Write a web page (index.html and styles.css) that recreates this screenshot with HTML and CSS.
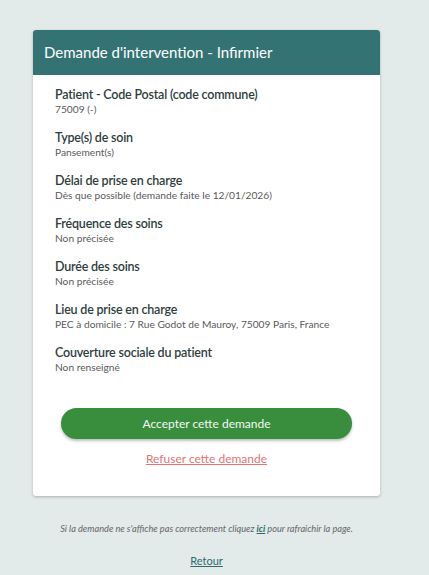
FILE: index.html
```html
<!DOCTYPE html>
<html lang="fr">
<head>
<meta charset="utf-8">
<link rel="stylesheet" href="styles.css">
</head>
<body>
<div class="page">
  <div class="card">
    <div class="card-header">Demande d'intervention - Infirmier</div>
    <div class="card-body">
      <div class="field">
        <div class="label">Patient - Code Postal (code commune)</div>
        <div class="value">75009 (-)</div>
      </div>
      <div class="field">
        <div class="label">Type(s) de soin</div>
        <div class="value">Pansement(s)</div>
      </div>
      <div class="field">
        <div class="label">Délai de prise en charge</div>
        <div class="value">Dès que possible (demande faite le 12/01/2026)</div>
      </div>
      <div class="field">
        <div class="label">Fréquence des soins</div>
        <div class="value">Non précisée</div>
      </div>
      <div class="field">
        <div class="label">Durée des soins</div>
        <div class="value">Non précisée</div>
      </div>
      <div class="field">
        <div class="label">Lieu de prise en charge</div>
        <div class="value">PEC à domicile : 7 Rue Godot de Mauroy, 75009 Paris, France</div>
      </div>
      <div class="field">
        <div class="label">Couverture sociale du patient</div>
        <div class="value">Non renseigné</div>
      </div>
      <div class="actions">
        <button class="btn-accept">Accepter cette demande</button>
        <a class="link-refuse" href="#">Refuser cette demande</a>
      </div>
    </div>
  </div>
  <p class="note">Si la demande ne s'affiche pas correctement cliquez <a href="#">ici</a> pour rafraichir la page.</p>
  <div class="back"><a href="#">Retour</a></div>
</div>
</body>
</html>
```
FILE: styles.css
```css
html, body {
  margin: 0;
  padding: 0;
}
body {
  background: #e2eaea;
  font-family: Lato, "Open Sans", "Liberation Sans", sans-serif;
  color: #2f3d3d;
}
.page {
  padding: 30px 49px 0 33px;
}
.card {
  background: #fff;
  border-radius: 3px;
  box-shadow: 0 1px 3px rgba(0,0,0,0.25);
  overflow: hidden;
}
.card-header {
  background: #347373;
  color: #fff;
  font-size: 15px;
  height: 45px;
  line-height: 45px;
  padding: 0 11px;
}
.card-body {
  padding: 12px 22px 30px;
}
.field {
  margin-bottom: 15px;
}
.label {
  font-size: 12.5px;
  letter-spacing: -0.2px;
  font-weight: 600;
  color: #2f3d3d;
  line-height: 16px;
}
.value {
  font-size: 10.2px;
  color: #5a5a5a;
  line-height: 12px;
}
.actions {
  display: flex;
  flex-direction: column;
  align-items: center;
  padding-top: 20px;
}
.btn-accept {
  width: 291px;
  height: 31px;
  border: none;
  border-radius: 16px;
  background: #388e3c;
  color: #f4f8f4;
  font-family: inherit;
  font-size: 12px;
  box-shadow: 0 2px 3px rgba(0,0,0,0.25);
}
.link-refuse {
  margin-top: 12px;
  color: #e57373;
  font-size: 12px;
  text-decoration: underline;
}
.note {
  margin: 27px 0 0;
  text-align: center;
  font-style: italic;
  font-size: 9.2px;
  color: #666;
}
.note a {
  color: #2d6b6b;
  font-weight: 700;
}
.back {
  text-align: center;
  margin-top: 20px;
  font-size: 11px;
}
.back a {
  color: #2d6b6b;
}
```
